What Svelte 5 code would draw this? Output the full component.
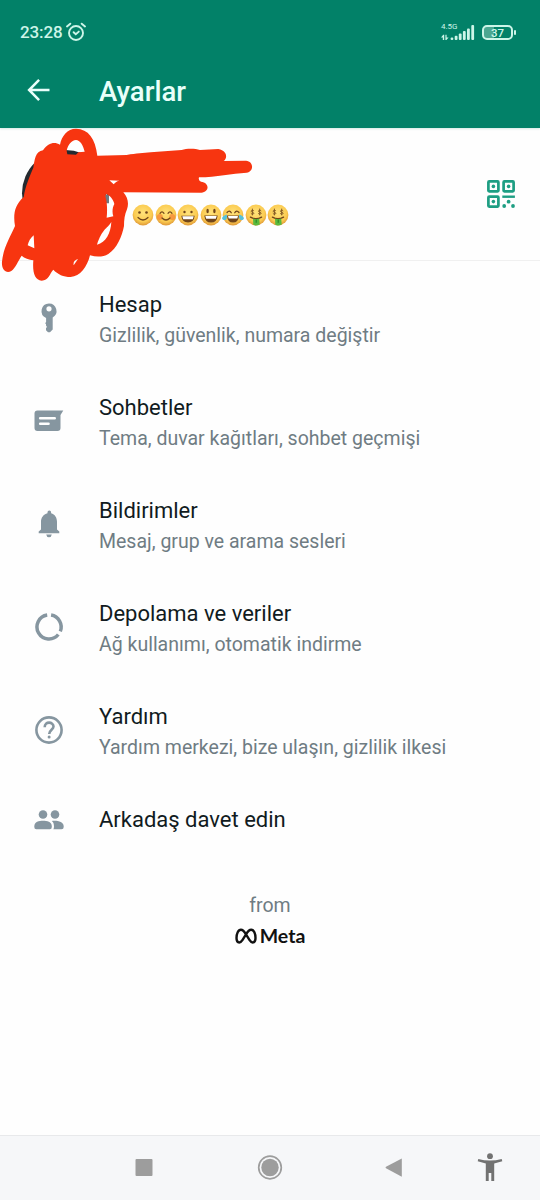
<script>
  const moods = ['smile', 'blush', 'grin', 'open', 'joy', 'money', 'money'];

  const items = [
    { icon: 'key', title: 'Hesap', text: 'Gizlilik, güvenlik, numara değiştir' },
    { icon: 'chat', title: 'Sohbetler', text: 'Tema, duvar kağıtları, sohbet geçmişi' },
    { icon: 'bell', title: 'Bildirimler', text: 'Mesaj, grup ve arama sesleri' },
    { icon: 'data', title: 'Depolama ve veriler', text: 'Ağ kullanımı, otomatik indirme' },
    { icon: 'help', title: 'Yardım', text: 'Yardım merkezi, bize ulaşın, gizlilik ilkesi' },
    { icon: 'people', title: 'Arkadaş davet edin', text: '' }
  ];
</script>

<div class="screen">
  <header>
    <div class="status">
      <div class="clock">
        <span>23:28</span>
        <svg class="alarm" width="20" height="20" viewBox="0 0 20 20" fill="none" stroke="#cdf5e8" stroke-width="1.9" stroke-linecap="round">
          <circle cx="10" cy="11" r="7" />
          <path d="M1 4.5 4.3 1.7M19 4.5 15.7 1.7" />
          <path d="M7.6 10.2 9.8 12.2 12.8 9.6" />
        </svg>
      </div>
      <div class="signals">
        <div class="network">
          <span>4.5G</span>
          <svg width="34" height="16" viewBox="0 0 34 16" fill="#cdf5e8">
            <path d="M0 12.6 2.2 9.8H3.2V15H1.8v-2.4zM4.4 9.8h1.2v2.6h2L5.4 15h-1z" />
            <rect x="9.6" y="12.5" width="2.7" height="2.5" rx="1" />
            <rect x="13.7" y="10.8" width="2.8" height="4.2" rx="1" />
            <rect x="17.8" y="8.5" width="2.8" height="6.5" rx="1" />
            <rect x="21.9" y="6" width="2.8" height="9" rx="1" />
            <rect x="26" y="3.4" width="2.8" height="11.6" rx="1" />
            <rect x="30.3" y="0" width="2.8" height="15" rx="1" />
          </svg>
        </div>
        <div class="battery"><span>37</span></div>
      </div>
    </div>
    <div class="toolbar">
      <svg width="24" height="24" viewBox="0 0 24 24" fill="none" stroke="#e9fffa" stroke-width="2.5">
        <path d="M12.1 1.8 2.1 12l10 10.2M2.5 12h20" />
      </svg>
      <h1>Ayarlar</h1>
    </div>
  </header>

  <section class="profile">
    <svg class="scribble" width="300" height="165" viewBox="0 0 900 495">
      <circle cx="196" cy="220" r="130" fill="#252a2f" />
      <path fill="#fefefe" d="M318 222 345 238 340 292 316 300z" />
      <path fill="#6f7980" d="M312 224h15v26h-9z" />
      <path
        fill="#f73510"
        fill-rule="evenodd"
        d="M228 26C265 27 286 55 292 107L380 105C410 100 430 99 452 97L545 90C560 85 585 85 600 90L655 87C685 93 681 117 671 123L738 122C762 124 762 155 740 158C695 160 650 171 597 172Q594 181 603 185C630 188 628 217 604 218L370 217C384 233 387 250 381 268C374 284 372 300 372 318C366 350 351 385 325 402C310 411 290 412 270 406C262 440 240 470 212 471C190 471 173 463 160 449C149 461 146 481 125 482C104 481 97 457 100 421C87 418 73 415 65 407C54 423 47 443 34 453C17 462 4 447 6 425C10 383 31 350 45 318C39 283 44 255 71 231C76 198 91 164 100 143C104 119 106 94 129 91C145 67 164 65 180 74C185 48 202 26 228 26Z
           M200 92 202 103 228 104 235 97 254 95C249 74 240 61 228 60C214 61 204 74 200 92Z
           M328 181 358 182C349 184 345 188 341 193Z
           M318 222C330 226 340 238 343 252C337 263 336 278 340 289L320 293C322 275 322 246 316 229Z
           M334 306C320 328 307 326 291 374C318 368 332 340 334 306Z
           M101 346C91 354 86 364 83 376L103 385Z
           M221 436C219 425 225 419 234 417Z"
      />
    </svg>
    <div class="about">
      {#each moods as mood}
        <svg width="22" height="22" viewBox="0 0 22 22" fill="none" stroke="#70451b" stroke-width="1.2" stroke-linecap="round">
          <defs>
            <radialGradient id="face" cx=".5" cy=".4" r=".6">
              <stop offset="0" stop-color="#ffe27a" />
              <stop offset=".7" stop-color="#fbcb51" />
              <stop offset="1" stop-color="#df9838" />
            </radialGradient>
          </defs>
          <circle cx="11" cy="11" r="10.4" fill="url(#face)" stroke="none" />
          {#if mood === 'smile'}
            <g fill="#70451b" stroke="none"><circle cx="7.5" cy="8.5" r="1.3" /><circle cx="14.5" cy="8.5" r="1.3" /></g>
            <path d="M6 13.5Q11 18.5 16 13.5" />
          {:else if mood === 'blush'}
            <g fill="#f68838" stroke="none" opacity=".75"><circle cx="4.8" cy="13" r="3" /><circle cx="17.2" cy="13" r="3" /></g>
            <path d="M5 9.3Q7 6.5 9 9.3M13 9.3Q15 6.5 17 9.3M7 14Q11 18 15 14" />
          {:else if mood === 'grin'}
            <g fill="#70451b" stroke="none"><circle cx="7.5" cy="8" r="1.2" /><circle cx="14.5" cy="8" r="1.2" /></g>
            <path fill="#70451b" stroke="none" d="M4.3 11.8h13.4Q17 18.5 11 18.5T4.3 11.8z" />
            <path fill="#fff" stroke="none" d="M5.3 12.3h11.4l-.9 2.9H6.2z" />
          {:else if mood === 'open'}
            <g fill="#70451b" stroke="none"><ellipse cx="7.6" cy="7" rx="1.2" ry="2.2" /><ellipse cx="14.4" cy="7" rx="1.2" ry="2.2" /></g>
            <path fill="#70451b" stroke="none" d="M4.3 11.4h13.4Q17 18.5 11 18.5T4.3 11.4z" />
            <path fill="#fff" stroke="none" d="M5.3 12h11.4l-.9 2.8H6.2z" />
          {:else if mood === 'joy'}
            <path d="M5 8.5Q7.5 5.5 9.3 8.8M12.7 8.8Q14.5 5.5 17 8.5" />
            <path fill="#70451b" stroke="none" d="M5 11.4h12Q16.5 18.5 11 18.5T5 11.4z" />
            <path fill="#fff" stroke="none" d="M6 12h10l-.7 2.6H6.7z" />
            <path fill="#56c1d9" stroke="none" d="M4.7 10.5C6 14 3.4 17.3 1 15.7S1.3 11.7 4.7 10.5zM17.3 10.5C16 14 18.6 17.3 21 15.7S20.7 11.7 17.3 10.5z" />
          {:else}
            <path d="M8.7 6.7C7.8 5.8 6 6.2 6.2 7.3S9 8.2 8.8 9.4 6.5 10.3 6 9.5M7.4 5v6M16 6.7C15.1 5.8 13.3 6.2 13.5 7.3S16.3 8.2 16.1 9.4 13.8 10.3 13.3 9.5M14.7 5v6" stroke-width=".8" />
            <path d="M5.5 13.2Q11 16.5 16.5 13.2" stroke-width="1.5" />
            <path fill="#59b93d" stroke="none" d="M8 14.6Q11 15.7 14.2 14.6L14.7 20.5Q11 22.3 8.3 20.8z" />
            <path stroke="#277f25" d="M11.2 15.8v2.6" stroke-width="1" />
          {/if}
        </svg>
      {/each}
    </div>
    <svg class="qr" width="28" height="28" viewBox="0 0 28 28" fill="none" stroke="#1e9e83" stroke-width="2.7">
      <rect x="1.4" y="1.4" width="10" height="10" rx=".8" />
      <rect x="16.6" y="1.4" width="10" height="10" rx=".8" />
      <rect x="1.4" y="16.6" width="10" height="10" rx=".8" />
      <g fill="#1e9e83" stroke="none">
        <circle cx="6.4" cy="6.4" r="1.8" />
        <circle cx="21.6" cy="6.4" r="1.8" />
        <circle cx="6.4" cy="21.6" r="1.8" />
        <rect x="15.3" y="15.5" width="12.6" height="2.4" />
        <circle cx="21.6" cy="21.7" r="1.9" />
        <circle cx="17.2" cy="26" r="1.9" />
        <circle cx="26" cy="26" r="1.9" />
      </g>
    </svg>
  </section>

  <main>
    {#each items as item (item.icon)}
      <div class="item" class:single={!item.text}>
        <svg class="icon" width="32" height="32" viewBox="0 0 32 32" fill="#8696a0">
          {#if item.icon === 'key'}
            <path fill-rule="evenodd" d="M16 1.5a7.5 7.5 0 0 1 3.7 14V27.5L17 30.2h-2L13 28.2v-2.1l1-1.2-1-1.5v-1.3l-.9-.9 1-1.3v-4A7.5 7.5 0 0 1 16 1.5zm0 2.7a2.6 2.6 0 1 0 0 5.2 2.6 2.6 0 0 0 0-5.2z" />
          {:else if item.icon === 'chat'}
            <path fill-rule="evenodd" d="M4.5 5.5H30.3L27.5 10V23Q27.5 26 24.5 26H4.5Q1.5 26 1.5 23V8.5Q1.5 5.5 4.5 5.5zM7.2 12a1.3 1.3 0 0 0 0 2.6H21.7a1.3 1.3 0 0 0 0-2.6zM7.2 17.4a1.3 1.3 0 0 0 0 2.6H15.5a1.3 1.3 0 0 0 0-2.6z" />
          {:else if item.icon === 'bell'}
            <path d="M14.5 4.2a1.8 1.8 0 0 1 3.6 0v1C22 6.2 24 9.7 24 13.7V21.5L26.3 23.5V25.3H5.7V23.5L8 21.5V13.7C8 9.7 10.4 6.2 14.5 5.2zM13.2 26.5h5.6q-.5 2.8-2.8 2.8t-2.8-2.8z" />
          {:else if item.icon === 'data'}
            <g fill="none" stroke="#8696a0" stroke-width="3.5">
              <path d="M18.1 4.1A12 12 0 0 1 27.3 20.4" />
              <path d="M25.3 23.5A12 12 0 1 1 14.2 4.1" />
            </g>
          {:else if item.icon === 'help'}
            <circle cx="16" cy="16" r="12.6" fill="none" stroke="#8696a0" stroke-width="2.6" />
            <path d="M11.7 13.2C11.7 7 20.5 7.5 20.5 12.6C20.5 15.5 16.2 16.2 16.2 20" fill="none" stroke="#8696a0" stroke-width="2.6" />
            <circle cx="16.1" cy="22.9" r="1.5" />
          {:else}
            <circle cx="10" cy="10.5" r="4.3" />
            <circle cx="22" cy="10.5" r="4.3" />
            <path d="M1.3 22.3C1.3 17.5 6 16.7 10 16.7S18.8 17.5 18.8 22.3V23Q18.8 25.3 16.8 25.3H3.3Q1.3 25.3 1.3 23z" />
            <path d="M20 16.8C25 16.5 30.7 17.7 30.7 22.3V23Q30.7 25.3 28.5 25.3H20.3Q21 24.5 21 22.5C21 19.8 20.3 18 18.8 17z" />
          {/if}
        </svg>
        <div class="label">
          <h2>{item.title}</h2>
          {#if item.text}
            <p>{item.text}</p>
          {/if}
        </div>
      </div>
    {/each}
  </main>

  <footer>
    <span class="from">from</span>
    <div class="meta">
      <svg width="22" height="16" viewBox="0 0 22 16" fill="none" stroke="#111" stroke-width="2.4">
        <path d="M11 6.5C9.4 3.6 8 1.7 5.9 1.7C3.2 1.7 1.5 6 1.5 10C1.5 15.3 5.2 15.6 7.4 12.2L11 6.5C12.6 3.6 14 1.7 16.2 1.7C19 1.7 20.5 6 20.5 10C20.5 15.3 16.8 15.6 14.6 12.2z" />
      </svg>
      <span>Meta</span>
    </div>
  </footer>

  <nav>
    <svg width="540" height="64" viewBox="0 1 540 64" fill="#9d9d9d">
      <rect x="135.5" y="24" width="17" height="17" rx="1" />
      <circle cx="270" cy="32.5" r="8.7" />
      <circle cx="270" cy="32.5" r="11.3" fill="none" stroke="#9d9d9d" stroke-width="1.7" />
      <path d="M401.8 23.5V41.8L386 33.3Q385 32.5 386 31.8z" />
      <g fill="#727272">
        <circle cx="490" cy="21.2" r="2.9" />
        <path d="M478.3 24Q490 27 501.7 24L502.3 26.3 494.2 28.4V46H491.3V38H488.7V46H485.8V28.4L477.7 26.3z" />
      </g>
    </svg>
  </nav>
</div>

<style>
  :global(body) {
    margin: 0;
    background: #fefefe;
  }

  .screen {
    width: 540px;
    height: 1200px;
    display: flex;
    flex-direction: column;
    overflow: hidden;
    font-family: Roboto, sans-serif;
    background: #fefefe;
  }

  svg {
    display: block;
    flex: none;
  }

  h1, h2, p {
    margin: 0;
    font-weight: 400;
    white-space: nowrap;
  }

  header {
    height: 128px;
    flex: none;
    background: #028168;
    box-shadow: 0 1px 2px #0281682b;
  }

  .status {
    height: 64px;
    box-sizing: border-box;
    padding: 0 27px 0 20px;
    display: flex;
    align-items: center;
    justify-content: space-between;
    color: #cdf5e8;
  }

  .clock {
    display: flex;
    gap: 3px;
    align-items: center;
    font-size: 17px;
    font-weight: 500;
    letter-spacing: -.1px;
  }

  .signals {
    display: flex;
    gap: 7px;
    align-items: center;
  }

  .network {
    position: relative;
    padding-top: 1px;
  }

  .network span {
    position: absolute;
    top: -1px;
    left: 0;
    font-size: 8px;
    line-height: 8px;
  }

  .battery {
    position: relative;
    box-sizing: border-box;
    width: 31px;
    height: 15px;
    border: 2px solid #cdf5e8;
    border-radius: 5px;
    background: linear-gradient(90deg, #4ba791 37%, transparent 37%);
    font-size: 11.5px;
    font-weight: 500;
    line-height: 12px;
    text-align: center;
  }

  .battery::after {
    content: '';
    position: absolute;
    right: -5px;
    top: 3px;
    width: 2px;
    height: 5px;
    border-radius: 1px;
    background: #cdf5e8;
  }

  .toolbar {
    display: flex;
    align-items: center;
    height: 52px;
    padding-left: 27px;
    gap: 48px;
  }

  h1 {
    padding-top: 3px;
    font-size: 27.5px;
    font-weight: 500;
    line-height: 51px;
    color: #e9fffa;
  }

  .profile {
    position: relative;
    box-sizing: border-box;
    height: 133px;
    flex: none;
    border-bottom: 1px solid #f0f0f0;
    padding: 0 25px 0 132px;
    display: flex;
    align-items: center;
    justify-content: space-between;
  }

  .scribble {
    position: absolute;
    top: -8px;
    left: 0;
    z-index: 1;
  }

  .about {
    display: flex;
    gap: .5px;
    padding-top: 42px;
  }

  main {
    flex: none;
    padding-top: 5px;
  }

  .item {
    display: flex;
    align-items: center;
    height: 103px;
    padding-left: 33px;
    gap: 34px;
  }

  .label {
    padding-top: 6px;
  }

  .item.single {
    height: 77px;
  }

  .single .label {
    padding: 0;
  }

  h2 {
    font-size: 22px;
    line-height: 30px;
    color: #111b21;
  }

  p {
    font-size: 19.5px;
    line-height: 31px;
    color: #6f7c83;
  }

  footer {
    display: flex;
    flex-direction: column;
    align-items: center;
    gap: 5px;
    margin-top: 34px;
  }

  .from {
    font-size: 19.5px;
    line-height: 28px;
    color: #6f7c83;
  }

  .meta {
    display: flex;
    align-items: center;
    gap: 3px;
    font-family: Lato, sans-serif;
    font-size: 19.5px;
    font-weight: 700;
    line-height: 22px;
    color: #111;
  }

  nav {
    height: 64px;
    flex: none;
    margin-top: auto;
    border-top: 1px solid #e8e9eb;
    background: #f6f7f9;
  }
</style>
